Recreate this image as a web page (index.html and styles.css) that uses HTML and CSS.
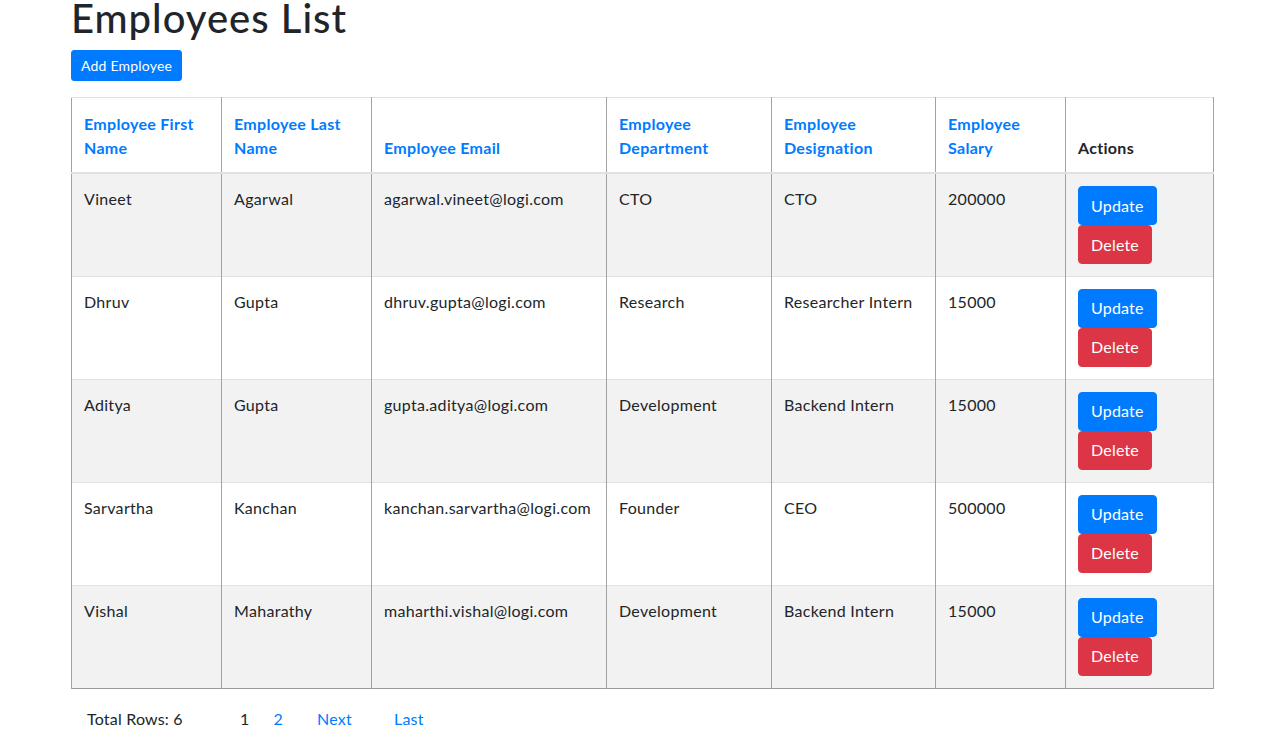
FILE: index.html
```html
<!DOCTYPE html>
<html lang="en">
<head>
<meta charset="utf-8">
<title>Employees List</title>
<link rel="stylesheet" href="styles.css">
</head>
<body>
<div class="page">
  <h1 class="title">Employees List</h1>
  <button class="btn btn-primary btn-sm">Add Employee</button>
  <table class="emp-table">
    <colgroup>
      <col class="c1"><col class="c2"><col class="c3"><col class="c4"><col class="c5"><col class="c6"><col class="c7">
    </colgroup>
    <thead>
      <tr>
        <th><a class="sort">Employee First Name</a></th>
        <th><a class="sort">Employee Last Name</a></th>
        <th><a class="sort">Employee Email</a></th>
        <th><a class="sort">Employee Department</a></th>
        <th><a class="sort">Employee Designation</a></th>
        <th><a class="sort">Employee Salary</a></th>
        <th>Actions</th>
      </tr>
    </thead>
    <tbody>
      <tr>
        <td>Vineet</td><td>Agarwal</td><td>agarwal.vineet@logi.com</td><td>CTO</td><td>CTO</td><td>200000</td>
        <td><div class="actions"><button class="btn btn-primary">Update</button><button class="btn btn-danger">Delete</button></div></td>
      </tr>
      <tr>
        <td>Dhruv</td><td>Gupta</td><td>dhruv.gupta@logi.com</td><td>Research</td><td>Researcher Intern</td><td>15000</td>
        <td><div class="actions"><button class="btn btn-primary">Update</button><button class="btn btn-danger">Delete</button></div></td>
      </tr>
      <tr>
        <td>Aditya</td><td>Gupta</td><td>gupta.aditya@logi.com</td><td>Development</td><td>Backend Intern</td><td>15000</td>
        <td><div class="actions"><button class="btn btn-primary">Update</button><button class="btn btn-danger">Delete</button></div></td>
      </tr>
      <tr>
        <td>Sarvartha</td><td>Kanchan</td><td>kanchan.sarvartha@logi.com</td><td>Founder</td><td>CEO</td><td>500000</td>
        <td><div class="actions"><button class="btn btn-primary">Update</button><button class="btn btn-danger">Delete</button></div></td>
      </tr>
      <tr>
        <td>Vishal</td><td>Maharathy</td><td>maharthi.vishal@logi.com</td><td>Development</td><td>Backend Intern</td><td>15000</td>
        <td><div class="actions"><button class="btn btn-primary">Update</button><button class="btn btn-danger">Delete</button></div></td>
      </tr>
    </tbody>
  </table>
  <div class="pager">
    <span class="total">Total Rows: 6</span>
    <span class="pages"><span class="page-cur">1</span><a class="page-link">2</a></span>
    <a class="page-link next">Next</a>
    <a class="page-link last">Last</a>
  </div>
</div>
</body>
</html>
```
FILE: styles.css
```css
* { box-sizing: border-box; }
html, body { margin: 0; padding: 0; background: #fff; }
body {
  font-family: "Segoe UI", Lato, "Noto Sans", sans-serif;
  font-size: 16px;
  line-height: 1.5;
  color: #212529;
}
.page {
  padding-left: 71px;
  width: 1213px;
}
.title {
  margin: -6px 0 8px;
  font-size: 40px;
  font-weight: 500;
  line-height: 1.2;
  letter-spacing: 1px;
  color: #212529;
}
.btn {
  display: inline-block;
  font-family: inherit;
  font-size: 16px;
  line-height: 1.5;
  letter-spacing: 0.2px;
  color: #fff;
  border: 1px solid transparent;
  padding: 6px 12px;
  border-radius: 4px;
  cursor: pointer;
}
.btn-primary { background: #007bff; border-color: #007bff; }
.btn-danger { background: #dc3545; border-color: #dc3545; }
.btn-sm {
  font-size: 14px;
  padding: 3px 9px;
  border-radius: 3px;
  height: 31px;
}
.emp-table {
  margin-top: 16px;
  width: 1142px;
  table-layout: fixed;
  border-collapse: collapse;
  border-left: 1px solid #999;
  border-right: 1px solid #999;
  border-bottom: 1px solid #999;
  letter-spacing: 0.3px;
}
.c1 { width: 150px; } .c2 { width: 150px; } .c3 { width: 235px; }
.c4 { width: 165px; } .c5 { width: 164px; } .c6 { width: 130px; } .c7 { width: 148px; }
.emp-table th, .emp-table td {
  padding: 13px 12px 12px 12px;
  text-align: left;
  vertical-align: top;
  border-left: 1px solid #a3a3a3;
  border-right: 1px solid #a3a3a3;
  border-top: 1px solid #dee2e6;
}
.emp-table th {
  padding-top: 14px;
  vertical-align: bottom;
  font-weight: 700;
  border-bottom: 2px solid #dee2e6;
}
.sort { color: #007bff; text-decoration: none; }
.emp-table tbody tr:nth-child(odd) { background: #f2f2f2; }
.emp-table td { height: 103px; padding-bottom: 11px; }
.actions {
  display: flex;
  flex-direction: column;
  align-items: flex-start;
  margin-top: -1px;
}
.actions .btn { height: 39px; }
.pager {
  display: flex;
  align-items: center;
  padding: 18px 0 0 16px;
  font-size: 16px;
  letter-spacing: 0.2px;
}
.total { width: 153px; }
.pages { display: flex; gap: 24px; width: 77px; }
.page-link { color: #007bff; text-decoration: none; }
.next { width: 77px; }
```
